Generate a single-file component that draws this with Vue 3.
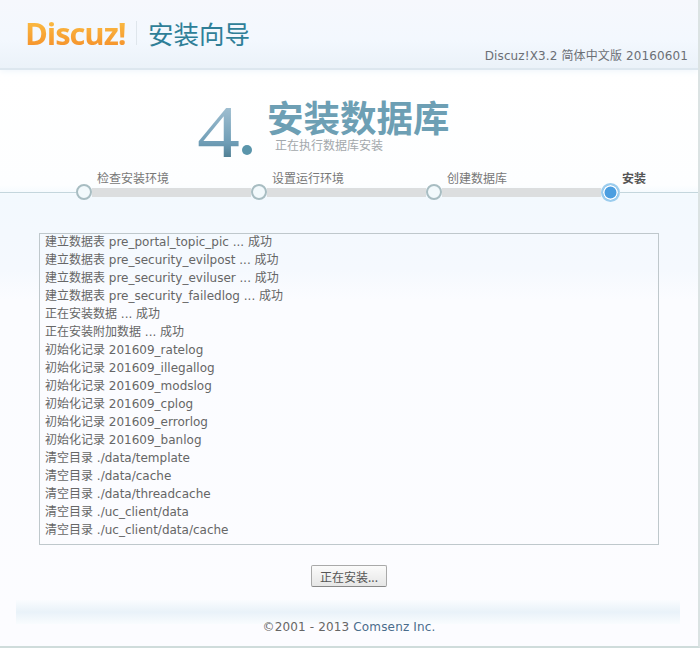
<template>
  <div class="page">
    <header class="top">
      <div class="brand">
        <span class="logo">Discuz!</span>
        <span class="divider"></span>
        <span class="wizard">安装向导</span>
      </div>
      <div class="version">Discuz!X3.2 简体中文版 20160601</div>
    </header>

    <section class="heading">
      <span class="num"><span class="digit">4</span><i class="num-dot"></i></span>
      <div class="titles">
        <h1>安装数据库</h1>
        <p>正在执行数据库安装</p>
      </div>
    </section>

    <section class="steps">
      <div class="labels">
        <span v-for="s in steps" :key="s" class="label" :class="{ current: s === '安装' }">{{ s }}</span>
      </div>
      <div class="track">
        <span class="line first"></span>
        <template v-for="(s, i) in steps" :key="s">
          <span class="dot" :class="{ active: i === 3 }"></span>
          <span v-if="i < 3" class="bar"></span>
        </template>
        <span class="line"></span>
      </div>
    </section>

    <main class="body">
      <div class="log">
        <div v-for="l in logs" :key="l" class="row">{{ l }}</div>
      </div>
      <button class="btn" type="button">正在安装...</button>
    </main>

    <footer class="foot">
      <div class="band"></div>
      <p>©2001 - 2013 <span class="co">Comsenz Inc.</span></p>
    </footer>
  </div>
</template>

<script setup>
const steps = ['检查安装环境', '设置运行环境', '创建数据库', '安装']
const logs = [
  '建立数据表 pre_portal_topic_pic ... 成功',
  '建立数据表 pre_security_evilpost ... 成功',
  '建立数据表 pre_security_eviluser ... 成功',
  '建立数据表 pre_security_failedlog ... 成功',
  '正在安装数据 ... 成功',
  '正在安装附加数据 ... 成功',
  '初始化记录 201609_ratelog',
  '初始化记录 201609_illegallog',
  '初始化记录 201609_modslog',
  '初始化记录 201609_cplog',
  '初始化记录 201609_errorlog',
  '初始化记录 201609_banlog',
  '清空目录 ./data/template',
  '清空目录 ./data/cache',
  '清空目录 ./data/threadcache',
  '清空目录 ./uc_client/data',
  '清空目录 ./uc_client/data/cache'
]
</script>

<style>
html, body { margin: 0; background: #fafcff; }
</style>

<style scoped>
.page {
  width: 700px;
  height: 648px;
  box-sizing: border-box;
  overflow: hidden;
  border-right: 2px solid #dbe3e3;
  border-bottom: 2px solid #cfdcdb;
  font: 12px "DejaVu Sans", "Noto Sans CJK SC", sans-serif;
  color: #666;
  background: linear-gradient(#ffffff 72px, #fdfeff 185px, #f3f9fe 195px, #f5f9fe 270px, #fbfcff 300px, #fcfcff);
}
.top {
  height: 70px;
  box-sizing: border-box;
  position: relative;
  border-bottom: 2px solid #dde7ef;
  background: linear-gradient(#f6f8fd, #f3f8fe 40px, #ebf2f9);
  box-shadow: 0 2px 6px #f1f7fc;
}
.brand {
  display: flex;
  align-items: center;
  height: 68px;
  padding-left: 25px;
  padding-bottom: 2px;
  box-sizing: border-box;
}
.logo {
  width: 102px;
  font: bold 31px/1 "Open Sans", sans-serif;
  letter-spacing: -1.1px;
  background: linear-gradient(#fbbf45, #f5902a);
  -webkit-background-clip: text;
  background-clip: text;
  color: transparent;
}
.divider {
  width: 1px;
  height: 24px;
  margin: 0 11px 0 9px;
  background: #dfe6ec;
}
.wizard {
  font: 25.5px/1 "Noto Sans CJK SC", sans-serif;
  color: #2f7f98;
}
.version {
  position: absolute;
  right: 10px;
  top: 47px;
  line-height: 18px;
  color: #6b6f75;
  letter-spacing: 0.12px;
}
.heading {
  display: flex;
  height: 94px;
  padding: 29px 0 0 197px;
  box-sizing: border-box;
}
.num {
  position: relative;
  width: 70px;
  height: 64px;
  margin-top: 3px;
}
.digit {
  display: inline-block;
  font: 74px/60px "Liberation Serif", serif;
  transform: scaleX(1.16);
  transform-origin: left center;
  background: linear-gradient(#a6c3d4, #6f9db6 68%, #477689);
  -webkit-background-clip: text;
  background-clip: text;
  color: transparent;
}
.num-dot {
  position: absolute;
  left: 45px;
  top: 43px;
  width: 10px;
  height: 10px;
  border-radius: 50%;
  background: #5a95ab;
}
h1 {
  margin: 0;
  font: bold 36.5px/36px "Noto Sans CJK SC", sans-serif;
  color: #6d9fb4;
}
p { margin: 0; }
.titles p {
  padding: 0 0 0 8px;
  line-height: 16px;
  margin-top: 3px;
  color: #a3a8ac;
}
.steps {
  height: 40px;
  margin-top: 8px;
}
.labels {
  display: flex;
  padding-left: 97px;
  height: 14px;
  line-height: 14px;
}
.label { width: 175px; color: #777; }
.label.current { font-weight: bold; color: #555; width: auto; }
.track {
  display: flex;
  align-items: center;
  height: 20px;
  margin-top: -4px;
}
.line {
  flex: 1;
  height: 1px;
  background: #c4d6dd;
}
.line.first { flex: none; width: 76px; }
.dot {
  box-sizing: border-box;
  width: 16px;
  height: 16px;
  flex: none;
  border-radius: 50%;
  border: 2px solid #a8bdc2;
  background: #f2f9fc;
}
.dot.active {
  width: 19px;
  height: 19px;
  margin-right: -1px;
  border: 2px solid #9ccdee;
  background: #4c9ee0;
  box-shadow: inset 0 0 0 1.5px #fff;
}
.bar {
  width: 159px;
  height: 9px;
  flex: none;
  background: #dcdedf;
}
.body {
  display: flex;
  flex-direction: column;
  align-items: center;
  padding: 21px 0 0 0;
}
.log {
  box-sizing: border-box;
  width: 620px;
  height: 312px;
  border: 1px solid #bfc8cc;
  padding: 0 5px;
  line-height: 18px;
  color: #666;
}
.row { white-space: nowrap; position: relative; top: -1px; }
.btn {
  margin-top: 20px;
  width: 76px;
  height: 22px;
  padding: 0;
  box-sizing: border-box;
  border: 1px solid #a9a9a9;
  border-bottom-color: #888;
  border-radius: 2px;
  background: linear-gradient(#fbfbfb, #e6e6e6);
  font: 12px "Noto Sans CJK SC", sans-serif;
  color: #555;
}
.foot {
  margin-top: 13px;
}
.band {
  height: 24px;
  margin: 0 18px 0 16px;
  background: linear-gradient(#fafcff, #e9f2f9 50%, #f9fcfe);
}
.foot p {
  text-align: center;
  line-height: 16px;
  margin-top: -5px;
  color: #666;
  letter-spacing: 0.15px;
}
.co { color: #4a6d8c; }
</style>
